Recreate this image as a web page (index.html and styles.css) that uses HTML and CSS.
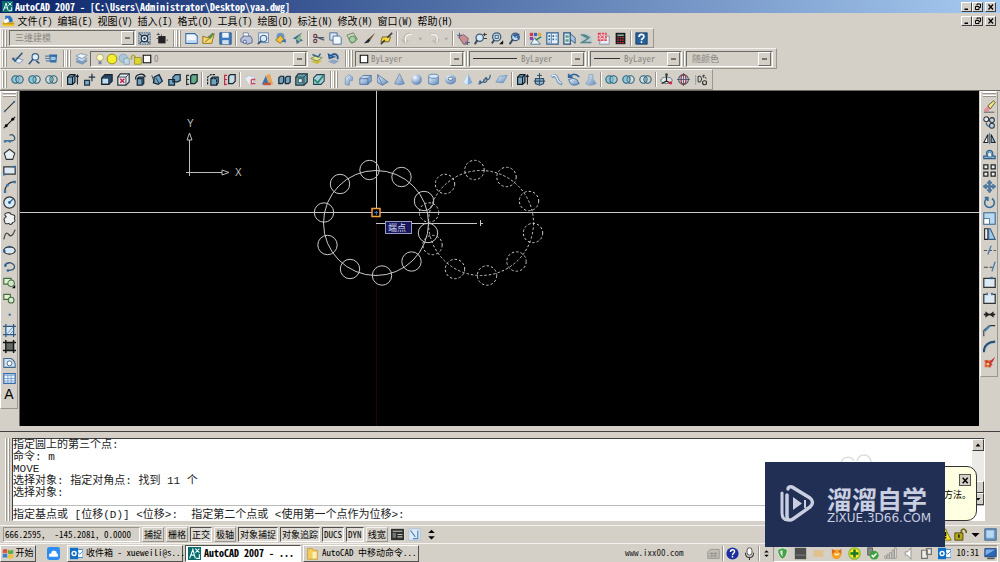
FILE: index.html
```html
<!DOCTYPE html>
<html lang="zh-CN">
<head>
<meta charset="utf-8">
<title>AutoCAD 2007</title>
<link rel="stylesheet" href="styles.css">
</head>
<body>
<svg class="defs" aria-hidden="true">
<defs>
<linearGradient id="g" x1="0" y1="0" x2="1" y2="1"><stop offset="0" stop-color="#eef6ff"/><stop offset="1" stop-color="#5d86b8"/></linearGradient>
<radialGradient id="gr" cx=".35" cy=".3" r=".8"><stop offset="0" stop-color="#f4f9ff"/><stop offset="1" stop-color="#4c78b0"/></radialGradient>
</defs>
<symbol id="acad" viewBox="0 0 16 16"><path fill="#0b6b6b" d="M0 0h16v16H0z"/><path d="M2 14 6 3l3 11M3 10h5M9 2l5 5M14 2 9 7M10 14h4V9" stroke="#e8ffff" stroke-width="1.4" fill="none"/></symbol>
<symbol id="dwg" viewBox="0 0 16 16"><path fill="#f4c430" d="M1 9h14v6H1z"/><path fill="#2a6fc0" d="M4 2h6l3 4v4H4z"/><path fill="#fff" d="M2 8l5-3 2 4-5 3z"/><path d="M1 12h14" stroke="#a87a10"/></symbol>
<symbol id="gear" viewBox="0 0 16 16"><path d="M1 1h14v14H1z" fill="#b9cbd8" stroke="#2e4358" stroke-dasharray="2 1"/><circle cx="8" cy="8" r="4" fill="#e7eef4" stroke="#26394c" stroke-width="1.6"/><circle cx="8" cy="8" r="1.5" fill="#26394c"/><path d="m2 2 3 3m6 6 3 3M14 2l-3 3M5 11l-3 3" stroke="#26394c" stroke-width="1.3"/></symbol>
<symbol id="ws" viewBox="0 0 16 16"><path d="M4 5h9v9H4z" fill="#222"/><path d="M4 1v3M2 3h4M8 3v2M14 10h2M2 8h2" stroke="#444"/></symbol>
<symbol id="new" viewBox="0 0 16 16"><path d="M1 2h11l3 3v9H1z" fill="#f0f7ff" stroke="#3a6ca8" stroke-width="1.3"/><path d="M3 10h11v3H3z" fill="#bcd6f2"/></symbol>
<symbol id="open" viewBox="0 0 16 16"><path d="M1 14V5l5 2 9-5-3 12z" fill="#f5d76c" stroke="#80651a"/><path d="M7 6 13 1l2 1-5 7z" fill="#5f8a48"/><path d="m4 12 5-4" stroke="#7a5b10"/></symbol>
<symbol id="save" viewBox="0 0 16 16"><path d="M1 1h14v14H1z" fill="#3f79bd" stroke="#234c80"/><path d="M4 1h8v6H4z" fill="#eaf3fc"/><path d="M4 10h8v5H4z" fill="#cfdeed"/></symbol>
<symbol id="print" viewBox="0 0 16 16"><path d="M4 1h6l1 6H4z" fill="#fff" stroke="#6877a0"/><path d="M1 8l4-3h8l2 4v4l-6 2-8-3z" fill="#b9c2dc" stroke="#4e5b86"/><circle cx="6" cy="12" r="2" fill="#dfe5f5" stroke="#4e5b86"/></symbol>
<symbol id="prev" viewBox="0 0 16 16"><path d="M2 1h12v12H2z" fill="#eef6fc" stroke="#5278a2"/><circle cx="8" cy="8" r="4" fill="#d5eafa" stroke="#46688c" stroke-width="1.4"/><path d="m5 11-4 4" stroke="#37536f" stroke-width="2"/></symbol>
<symbol id="pub" viewBox="0 0 16 16"><circle cx="8" cy="6" r="5" fill="#6e97c7"/><path d="M2 10l6-6 4 5-4 5z" fill="#f1c23e" stroke="#8a6a18"/><path d="M9 12l5-4 1 5z" fill="#3774b8"/></symbol>
<symbol id="dwf" viewBox="0 0 16 16"><path d="M13 1 2 8l4 1 1 6 4-3 4-2-4-2z" fill="#3f6f92"/><path d="M13 1 6 9l5 3z" fill="#8bbf8c"/></symbol>
<symbol id="cut" viewBox="0 0 16 16"><path d="M15 7H6M15 10 5 6" stroke="#505a70" stroke-width="1.6"/><circle cx="4" cy="5" r="2" fill="none" stroke="#6a3a4a" stroke-width="1.4"/><circle cx="4" cy="11" r="2" fill="none" stroke="#6a3a4a" stroke-width="1.4"/></symbol>
<symbol id="copy" viewBox="0 0 16 16"><path d="M1 1h9v9H1z" fill="#d6e6f5" stroke="#3a5f8a"/><path d="M5 5h8l2 2v8H5z" fill="#f2f8ff" stroke="#3a5f8a"/></symbol>
<symbol id="paste" viewBox="0 0 16 16"><path d="M1 4l8-3 5 8-7 5z" fill="#cfd9c2" stroke="#5f7356"/><circle cx="8" cy="9" r="4" fill="#a5cf9e" stroke="#4c7b50"/></symbol>
<symbol id="brush" viewBox="0 0 16 16"><path d="M15 1 7 8l2 2z" fill="#6b573a"/><path d="M7 8 1 14l6-1 2-3z" fill="#20252c"/></symbol>
<symbol id="match" viewBox="0 0 16 16"><path d="M3 6h10l-2 6H1z" fill="#f7d63e" stroke="#665410"/><path d="M15 1 9 7M6 10l-5 5" stroke="#444" stroke-width="2"/></symbol>
<symbol id="undo" viewBox="0 0 16 16"><path d="M12 2C5 1 3 6 5 12M1 9l4 4 4-3" stroke="#b9b7b2" stroke-width="2" fill="none"/><path d="M13 3C6 2 4 7 6 13" stroke="#f7f7f4" stroke-width="1.500" fill="none"/></symbol>
<symbol id="redo" viewBox="0 0 16 16"><path d="M4 2c7-1 9 4 7 10M7 10l4 3 4-4" stroke="#b9b7b2" stroke-width="2" fill="none"/><path d="M5 3c7-1 9 4 7 10" stroke="#f7f7f4" stroke-width="1.500" fill="none"/></symbol>
<symbol id="tiny" viewBox="0 0 16 16"><path d="M5 7h5l-2 3z" fill="#aaa8a2"/></symbol>
<symbol id="pan" viewBox="0 0 16 16"><path d="M2 6c2-3 5-1 6-3l6 5-2 7H8z" fill="#c98d93" stroke="#70505a"/><path d="M3 1v6M0 4h6M13 11v5M10 13h6" stroke="#51678b" stroke-width="1.3"/></symbol>
<symbol id="zoomr" viewBox="0 0 16 16"><circle cx="7" cy="7" r="4.5" fill="#d2eaf8" stroke="#3f5a78" stroke-width="1.6"/><path d="m4 10-3 5" stroke="#33495f" stroke-width="2.4"/><path d="M11 3h5M13 1v4M12 8h4" stroke="#222"/></symbol>
<symbol id="zoomw" viewBox="0 0 16 16"><circle cx="7" cy="6" r="5" fill="#c9e2f2" stroke="#3f5a78" stroke-width="1.6"/><path d="M5 4h4v4H5z" fill="none" stroke="#345"/><path d="m4 10-3 4" stroke="#33495f" stroke-width="2.2"/><path d="M15 10v5h-5z" fill="#111"/></symbol>
<symbol id="zoomp" viewBox="0 0 16 16"><circle cx="9" cy="6" r="4.7" fill="#b8d6ee" stroke="#3f5a78" stroke-width="1.6"/><path d="m6 9-4 6" stroke="#33495f" stroke-width="2.4"/><path d="M15 2 5 3l4 4zM9 5h5v5" fill="#2f5f9a"/></symbol>
<symbol id="props" viewBox="0 0 16 16"><path d="M1 1h4v4H1z" fill="#d33a48"/><path d="M6 1h4v4H6z" fill="#3b62c9"/><path d="M11 1h4v4h-4z" fill="#d9b13b"/><path d="M1 6h4v4H1z" fill="#8c45af"/><path d="M2 15 7 7l7 8z" fill="#eaf4fd" stroke="#42688e"/><path d="m8 10 7-4" stroke="#27804c" stroke-width="2"/></symbol>
<symbol id="dc" viewBox="0 0 16 16"><path d="M1 1h14v14H1z" fill="#e6f2fc" stroke="#31608e" stroke-width="1.5"/><path d="M3 4h2v2H3zM3 8h2v2H3zM3 12h2v1H3zM8 4h2v2H8zM12 4h1v2h-1zM8 8h2v2H8zM12 8h1v2h-1zM8 12h5" fill="#315f8d"/><path d="M6.500 2v12" stroke="#31608e"/></symbol>
<symbol id="tp" viewBox="0 0 16 16"><path d="M1 1h8v14H1z" fill="#d8eafa" stroke="#284f79" stroke-width="1.5"/><path d="M3 4h4v3H3zM3 9h4v3H3z" fill="#62a07d"/><path d="M9 2l6 5v7l-6-5z" fill="#a8c5df" stroke="#284f79"/></symbol>
<symbol id="ssm" viewBox="0 0 16 16"><path d="M1 2h9l5 4v8H1z" fill="#bccbd1"/><path d="m1 3 9 5-8 5h12M4 3l8 4" stroke="#538783" fill="none" stroke-width="1.7"/></symbol>
<symbol id="mark" viewBox="0 0 16 16"><path d="M5 5h10v10H3z" fill="#e7eef8" stroke="#7b86a6"/><path d="M2 2h9v8H2z" fill="#fbd3d5" stroke="#d8485a" stroke-width="2" stroke-dasharray="3 1"/><path d="m4 4 5 4m0-4L4 8" stroke="#c4283a"/></symbol>
<symbol id="calc" viewBox="0 0 16 16"><path d="M2 1h12v14H2z" fill="#161b20"/><path d="M4 3h8v2H4z" fill="#8ab59c"/><path d="M4 7h8M4 10h8M4 13h8" stroke="#d23c3c" stroke-width="1.600" stroke-dasharray="2 1"/></symbol>
<symbol id="help" viewBox="0 0 16 16"><path d="M1 1h14v14H1z" fill="#25619d" stroke="#16365a"/><path d="M5 6c0-4 6-4 6-.5C11 8 8 8 8 10M8 11.500v2" stroke="#fff" stroke-width="2" fill="none"/></symbol>
<symbol id="l1" viewBox="0 0 16 16"><path d="M1 9l6-2 8 3-5 4z" fill="#e9f3fb" stroke="#6b8fb4"/><path d="M14 1 5 11 2 7" stroke="#35587c" stroke-width="2" fill="none"/></symbol>
<symbol id="l2" viewBox="0 0 16 16"><path d="M1 12l6-8 7 9z" fill="#cbd9ea"/><circle cx="9" cy="6" r="4" fill="#deeffa" stroke="#3c628a" stroke-width="1.5"/><path d="m6 9-5 6m9-4 4 3" stroke="#36536f" stroke-width="2"/></symbol>
<symbol id="l3" viewBox="0 0 16 16"><path d="M5 3h10l-1 10H6z" fill="#2e6ca9"/><path d="M0 5h7M0 8h7M1 11h7" stroke="#5b7f9f" stroke-width="1.500"/><path d="M7 6h6v4H7z" fill="#9cc6e6"/></symbol>
<symbol id="layers" viewBox="0 0 16 16"><path d="m1 12 6-3 8 2-6 4z" fill="#7b9fc1" stroke="#7893ac"/><path d="m1 9 6-3 8 2-6 4z" fill="#c6d9ea" stroke="#7893ac"/><path d="m1 5 6-3 8 2-6 4z" fill="#edf4fb" stroke="#7893ac"/></symbol>
<symbol id="bulb" viewBox="0 0 16 16"><circle cx="8" cy="6" r="4.500" fill="#fffbc7" stroke="#a39c58"/><path d="M6 11h4v4H6z" fill="#7785a0"/></symbol>
<symbol id="sun" viewBox="0 0 16 16"><circle cx="8" cy="8" r="6.500" fill="#f6f02a" stroke="#938b1b" stroke-width="1.300"/></symbol>
<symbol id="frz" viewBox="0 0 16 16"><circle cx="7" cy="7" r="5.500" fill="#a9c8d9" stroke="#7f9db0"/><path d="M8 7h7v8H8z" fill="#c6d9e5" stroke="#7f9db0"/></symbol>
<symbol id="lock" viewBox="0 0 16 16"><path d="M2 9V5q2-4 5 0v3" fill="none" stroke="#a8a83c" stroke-width="2"/><path d="M6 6h9v9H6z" fill="#ddd630" stroke="#8f8a26"/></symbol>
<symbol id="sq" viewBox="0 0 16 16"><path d="M2 2h12v12H2z" fill="#fff" stroke="#111" stroke-width="1.800"/></symbol>
<symbol id="lcur" viewBox="0 0 16 16"><path d="m1 12 6-3 8 2-6 4z" fill="#cdbd45"/><path d="m1 8 6-3 8 2-6 4z" fill="#e7e38a" stroke="#68834b"/><path d="m3 3 7 3 3-4" stroke="#31658d" stroke-width="2" fill="none"/></symbol>
<symbol id="lprev" viewBox="0 0 16 16"><path d="m1 12 6-3 8 2-6 4z" fill="#8ea6c1"/><path d="M13 9c2-6-5-9-8-4M2 3l1 5 5-2z" stroke="#245a96" stroke-width="2" fill="#245a96" fill-opacity=".3"/></symbol>
<symbol id="u1" viewBox="0 0 16 16"><circle cx="5.500" cy="8" r="4.500" fill="#91c6d8" stroke="#285f78" stroke-width="1.300"/><circle cx="10.500" cy="8" r="4.500" fill="#91c6d8" fill-opacity=".6" stroke="#285f78" stroke-width="1.300"/></symbol>
<symbol id="u2" viewBox="0 0 16 16"><circle cx="10.500" cy="8" r="4.500" fill="#d8dcd8" stroke="#285f78" stroke-width="1.300"/><circle cx="5.500" cy="8" r="4.500" fill="#91c6d8" stroke="#285f78" stroke-width="1.300"/><path d="M8 4.500q-4 3.500 0 7" fill="none" stroke="#285f78"/></symbol>
<symbol id="u3" viewBox="0 0 16 16"><circle cx="5.500" cy="8" r="4.500" fill="#d8dcd8" stroke="#285f78" stroke-width="1.300"/><circle cx="10.500" cy="8" r="4.500" fill="none" stroke="#285f78" stroke-width="1.300"/><path d="M8 4.500q3 3.500 0 7-3-3.500 0-7" fill="#5faac4"/></symbol>
<symbol id="ext" viewBox="0 0 16 16"><path d="M2 5l3-3h6v9l-3 3H2z" fill="#7fa9c1" stroke="#111d2b" stroke-width="1.500"/><path d="M2 5h6v9M8 5l3-3M14 14V3m-1.500 2L14 2.500 15.500 5" fill="none" stroke="#111d2b" stroke-width="1.300"/></symbol>
<symbol id="mvf" viewBox="0 0 16 16"><path d="M2 9h6v6H2z" fill="#7fa9c1" stroke="#1d3144" stroke-width="1.500"/><path d="M11 1v9M7 5h8" stroke="#1d3144" stroke-width="1.500"/></symbol>
<symbol id="off" viewBox="0 0 16 16"><path d="M2 6l4-4h9v8l-4 4H2z" fill="#234562" stroke="#15202b" stroke-width="1.300"/><path d="M3 7h7v6H3z" fill="#c5deed"/></symbol>
<symbol id="del" viewBox="0 0 16 16"><path d="M1 5l3-4h11v10l-4 4H1z" fill="#e4e9ed" stroke="#24323f" stroke-width="1.500"/><path d="M1 5h10v10M11 5l4-4" fill="none" stroke="#24323f"/><path d="m4 7 5 5m0-5-5 5" stroke="#cc2348" stroke-width="1.800"/></symbol>
<symbol id="rot" viewBox="0 0 16 16"><path d="M4 7l2-2h6v8l-2 2H4z" fill="#6fa3bf" stroke="#142637" stroke-width="1.500"/><path d="M2 8C1 1 12-1 14 5M4 7h6v7" fill="none" stroke="#142637" stroke-width="1.400"/></symbol>
<symbol id="tap" viewBox="0 0 16 16"><path d="M4 5 10 2l4 8-5 4-6-2z" fill="#6fa3bf" stroke="#142637" stroke-width="1.500"/><path d="M1 3l3 8M6 6l4 7" stroke="#142637"/></symbol>
<symbol id="cpf" viewBox="0 0 16 16"><path d="M1 8h7v7H1zM6 5l3-3h6v7l-3 2H6z" fill="#6fa3bf" stroke="#142637" stroke-width="1.500"/></symbol>
<symbol id="col" viewBox="0 0 16 16"><path d="M7 4l2-2h6v8l-3 3H7z" fill="#65a985" stroke="#142637" stroke-width="1.500"/><path d="M2 2v13M2 3h3M2 8h3M2 14h3" stroke="#26383a" stroke-width="1.500"/></symbol>
<symbol id="colr" viewBox="0 0 16 16"><path d="M7 4l2-2h6v8l-3 3H7z" fill="#c9dbe3" stroke="#142637" stroke-width="1.500"/><path d="M2 2v13M2 3h3M2 8h3M2 14h3" stroke="#bd2e45" stroke-width="1.500"/></symbol>
<symbol id="colf" viewBox="0 0 16 16"><path d="M6 7l2-2h7v7l-2 3H6z" fill="#6fa3bf" stroke="#142637" stroke-width="1.500"/><path d="M6 7h7v8M2 14V5l4-3h5" fill="none" stroke="#142637" stroke-width="1.400" stroke-dasharray="3 1"/></symbol>
<symbol id="imp" viewBox="0 0 16 16"><path d="M1 6l5-3 7 2-2 9H7" fill="#e6edf8" stroke="#b6bdd2"/><path d="M9 8h5M9 8v5h5" stroke="#c94559" stroke-width="1.600" fill="none"/></symbol>
<symbol id="cln" viewBox="0 0 16 16"><path d="m1 14 5-11 4 11z" fill="#3774b0"/><path d="m6 3 5-2 4 13h-5z" fill="#e5a65b"/><path d="M3 12h9v3H3z" fill="#c4543d"/></symbol>
<symbol id="sep" viewBox="0 0 16 16"><path d="M1 6l2-2h4v7l-2 2H1zM9 6l2-2h4v7l-2 2H9z" fill="#6fa3bf" stroke="#142637" stroke-width="1.500"/></symbol>
<symbol id="shell" viewBox="0 0 16 16"><path d="M1 5l3-4h11v10l-4 4H1z" fill="#6da6ad" stroke="#193440" stroke-width="1.500"/><path d="M4 7h5v5H4z" fill="#d7eaea" stroke="#193440"/><path d="M11 5v10M11 5H1M11 5l4-4" stroke="#193440"/></symbol>
<symbol id="chk" viewBox="0 0 16 16"><path d="M2 6l4-4h9v8l-4 4H2z" fill="#a9cedb" stroke="#1f4453" stroke-width="1.300"/><path d="m3 8 4 4 7-9" stroke="#218464" stroke-width="2" fill="none"/></symbol>
<symbol id="ps" viewBox="0 0 16 16"><path d="M4 14V6l4-4 5 3v4l-4 1v5z" fill="url(#g)" stroke="#7297c2"/></symbol>
<symbol id="box" viewBox="0 0 16 16"><path d="M1 7l4-4h10v7l-4 4H1z" fill="url(#g)" stroke="#426b9e"/><path d="M1 7h10v7M11 7l4-4" stroke="#426b9e" fill="none"/></symbol>
<symbol id="wedge" viewBox="0 0 16 16"><path d="M2 2l13 9-7 4-6-3z" fill="url(#g)" stroke="#557aa5"/><path d="M2 2l6 13" stroke="#557aa5"/></symbol>
<symbol id="cone" viewBox="0 0 16 16"><path d="m8 1 6 12q-6 3-12 0z" fill="url(#g)" stroke="#6587aa"/></symbol>
<symbol id="sph" viewBox="0 0 16 16"><circle cx="8" cy="8" r="6.500" fill="url(#gr)"/></symbol>
<symbol id="cyl" viewBox="0 0 16 16"><path d="M2 4v9q6 3 12 0V4" fill="url(#g)" stroke="#4f78a6"/><ellipse cx="8" cy="4" rx="6" ry="2.500" fill="#d9e9f8" stroke="#4f78a6"/></symbol>
<symbol id="tor" viewBox="0 0 16 16"><ellipse cx="8" cy="8" rx="7" ry="6" fill="url(#gr)"/><ellipse cx="8" cy="7" rx="3" ry="2" fill="#eef2f4" stroke="#315c90"/></symbol>
<symbol id="pyr" viewBox="0 0 16 16"><path d="m9 1 5 11-6 3-5-4z" fill="#84add8"/><path d="M9 1 8 15l-5-4z" fill="#dceafa"/></symbol>
<symbol id="helix" viewBox="0 0 16 16"><path d="M1 12c1 4 4-1 2-2s-1 4 3 1 1-5 1-1 5 0 4-3-4 0 0 1 4-5 4-6" fill="none" stroke="#3e6387" stroke-width="1.500"/></symbol>
<symbol id="plane" viewBox="0 0 16 16"><path d="M1 11c2 0 3-8 6-7l8-1-5 9z" fill="url(#g)" stroke="#6b8fbb"/></symbol>
<symbol id="pull" viewBox="0 0 16 16"><path d="M3 7h10v6l-5 2-5-2z" fill="#9ab9d0" stroke="#31506c" stroke-width="1.400"/><path d="M8 0v6M5 3h6M1 10h14M8 8v6" stroke="#31506c" stroke-width="1.300"/></symbol>
<symbol id="sweep" viewBox="0 0 16 16"><path d="M2 5q5-4 7 2t6 6" stroke="#7395b8" stroke-width="4" fill="none"/><path d="M2 4q5-3 7 3t5 5" stroke="#e8f2fb" stroke-width="1.500" fill="none"/></symbol>
<symbol id="rev" viewBox="0 0 16 16"><path d="M2 5q7-7 13 0M2 1v4h5" stroke="#2f659b" stroke-width="2" fill="none"/><path d="M2 8q6-3 10 0l3 5q-7 4-11 0z" fill="url(#g)" stroke="#376892"/></symbol>
<symbol id="loft" viewBox="0 0 16 16"><path d="M6 2h5v5l4 6q-7 4-13 0l4-6z" fill="url(#g)" stroke="#86a2bd"/></symbol>
<symbol id="orb" viewBox="0 0 16 16"><ellipse cx="8" cy="9" rx="7" ry="4" fill="#e2e6e8" stroke="#48626d"/><path d="M8 2v8l6 3M8 10l-6 3" fill="none" stroke="#222" stroke-width="1.500"/><circle cx="13" cy="12" r="2" fill="#dd2742"/><circle cx="8" cy="2" r="1.600" fill="#243"/></symbol>
<symbol id="orb2" viewBox="0 0 16 16"><circle cx="8" cy="8" r="6" fill="#e2d8dd" stroke="#3b6057" stroke-width="1.300"/><ellipse cx="8" cy="8" rx="3" ry="6" fill="none" stroke="#a13555" stroke-width="1.500"/><path d="M0 8h16M8 0v16" stroke="#3c4d69"/></symbol>
<symbol id="orb3" viewBox="0 0 16 16"><path d="M2 3v12" stroke="#777" stroke-dasharray="2 1"/><path d="M5 4h3q3 3 0 7H5zM12 2v4M10 4l3-1M14 5l1 2" fill="none" stroke="#333" stroke-width="1.200"/><circle cx="13" cy="12" r="2.500" fill="none" stroke="#333" stroke-width="1.400"/></symbol>
<symbol id="line" viewBox="0 0 16 16"><path d="M2 14 14 2" stroke="#333" stroke-width="1.400"/><path d="M1 13h2v2H1zM13 1h2v2h-2z" fill="#3b6ba0"/></symbol>
<symbol id="xl" viewBox="0 0 16 16"><path d="M1 15 15 1" stroke="#222" stroke-width="1.500"/><circle cx="4" cy="12" r="1.800"/><circle cx="12" cy="4" r="1.800"/></symbol>
<symbol id="pl" viewBox="0 0 16 16"><path d="M2 11h9q5-1 3-5t-6-2" fill="none" stroke="#37516b" stroke-width="1.500"/><path d="M1 10h3v3H1zM7 10h3v3H7z" fill="#3477af"/></symbol>
<symbol id="poly" viewBox="0 0 16 16"><path d="m8 1.500 6.500 5L12 14H4L1.500 6.500z" fill="#e6eff5" stroke="#333" stroke-width="1.300"/></symbol>
<symbol id="rect" viewBox="0 0 16 16"><path d="M1 3.500h14v9H1z" fill="#dbe9f4" stroke="#333" stroke-width="1.500"/><path d="M0 11h3v3H0zM13 2h3v3h-3z" fill="#386fa8"/></symbol>
<symbol id="arc" viewBox="0 0 16 16"><path d="M2 15Q3 3 14 2" fill="none" stroke="#333" stroke-width="1.500"/><path d="M1 13h3v3H1zM4 5h3v3H4zM13 1h3v3h-3z" fill="#3c76ac"/></symbol>
<symbol id="circ" viewBox="0 0 16 16"><circle cx="8" cy="8" r="7" fill="#d9eaf8" stroke="#333" stroke-width="1.400"/><path d="m8 8 4-4" stroke="#2264a2" stroke-width="1.500"/><circle cx="8" cy="8" r="1.800" fill="#2264a2"/></symbol>
<symbol id="cloud" viewBox="0 0 16 16"><path d="M4 6Q0 2 5 1q4-1 5 2 6 0 4 5 2 4-2 5-2 4-5 1-5 2-5-3-2-3 2-5z" fill="#eef2f2" stroke="#333" stroke-width="1.300"/></symbol>
<symbol id="spl" viewBox="0 0 16 16"><path d="M1 14Q3 3 7 8t8-6" fill="none" stroke="#444" stroke-width="1.500"/></symbol>
<symbol id="ell" viewBox="0 0 16 16"><ellipse cx="8" cy="8" rx="7" ry="4.500" fill="#d6e7f5" stroke="#222" stroke-width="1.400"/><path d="M0 7h3v3H0zM7 2h2v3H7z" fill="#2264a2"/></symbol>
<symbol id="ella" viewBox="0 0 16 16"><path d="M2 7q3-5 9-3 6 4 1 8l-6 1" fill="none" stroke="#355779" stroke-width="1.600"/><circle cx="3" cy="7" r="1.500" fill="#2264a2"/><circle cx="6" cy="13" r="1.500" fill="#2264a2"/></symbol>
<symbol id="ins" viewBox="0 0 16 16"><path d="M1 3h9v7H1z" fill="#dff2d2" stroke="#466c43" stroke-width="1.400"/><circle cx="10" cy="9" r="4" fill="#cfe8c6" stroke="#466c43" stroke-width="1.300"/><path d="M15 11v4h-4z"/></symbol>
<symbol id="mk" viewBox="0 0 16 16"><path d="M1 3h8v6H1z" fill="#dff2d2" stroke="#466c43" stroke-width="1.400"/><circle cx="10" cy="10" r="3.500" fill="#d8e9cc" stroke="#466c43" stroke-width="1.300"/></symbol>
<symbol id="pt" viewBox="0 0 16 16"><path d="M7 7h2.500v2.500H7z" fill="#356797"/></symbol>
<symbol id="hat" viewBox="0 0 16 16"><path d="M4 3h9v10H4z" fill="#d6eafb"/><path d="M0 3h16M0 13h16M3.500 0v16M13 0v16" stroke="#315a83" stroke-width="1.500"/><path d="m5 12 7-8M8 13l5-5" stroke="#4e82b5"/></symbol>
<symbol id="grad" viewBox="0 0 16 16"><path d="M4 3h9v10H4z" fill="#626a64"/><path d="M0 3h16M0 13h16M3.500 0v16M13 0v16" stroke="#151515" stroke-width="1.800"/></symbol>
<symbol id="reg" viewBox="0 0 16 16"><path d="M1 14V3h9q5 3 5 8v3z" fill="#d1e4f5" stroke="#42698f" stroke-width="1.300"/><circle cx="8" cy="9" r="3" fill="#fff" stroke="#315577"/></symbol>
<symbol id="tab" viewBox="0 0 16 16"><path d="M1 2h14v12H1z" fill="#edf5fc" stroke="#376caa" stroke-width="1.500"/><path d="M1 4h14M6 3v11M10 3v11M1 8h14M1 11h14" stroke="#6b97cc"/></symbol>
<symbol id="erase" viewBox="0 0 16 16"><path d="m1 12 5-5 3 4-3 3H2z" fill="#e5919b"/><path d="m6 7 7-6 2 2-6 8z" fill="#f5e684" stroke="#4a4630"/><path d="M1 15h13" stroke="#444"/></symbol>
<symbol id="cp" viewBox="0 0 16 16"><circle cx="4" cy="4" r="3" fill="#e2edf5" stroke="#333" stroke-width="1.300"/><circle cx="11" cy="5" r="3" fill="#b5d3e8" stroke="#333" stroke-width="1.300"/><circle cx="11" cy="12" r="3" fill="#b5d3e8" stroke="#333" stroke-width="1.300"/><path d="M4 8q0 4 4 5" stroke="#36668d" fill="none" stroke-width="1.500"/></symbol>
<symbol id="mir" viewBox="0 0 16 16"><path d="M6 3v10H1z" fill="#fff" stroke="#222" stroke-width="1.300"/><path d="M10 3v10h5z" fill="#7bb4dc" stroke="#222" stroke-width="1.300"/><path d="M8 1v14" stroke="#356797"/></symbol>
<symbol id="ofs" viewBox="0 0 16 16"><path d="M1 13v-3h4Q3 3 8 3t4 7h3v3z" fill="#93c2e3" stroke="#315e87" stroke-width="1.500"/><path d="M5 11h6q0-6-3-6t-2 6" fill="#e7f0f5" stroke="#315e87"/></symbol>
<symbol id="arr" viewBox="0 0 16 16"><path d="M1 1h5v5H1zM10 1h5v5h-5zM1 10h5v5H1zM10 10h5v5h-5z" fill="#e8eff3" stroke="#222" stroke-width="1.500"/></symbol>
<symbol id="mv" viewBox="0 0 16 16"><path d="M8 0l3 4H9v3h3V5l4 3-4 3V9H9v3h2l-3 4-3-4h2V9H4v2L0 8l4-3v2h3V4H5z" fill="#4b80b0" stroke="#284f76" stroke-width=".6"/></symbol>
<symbol id="ro" viewBox="0 0 16 16"><path d="M5 3a6 6 0 1 0 6 0M2 2h4v4" fill="none" stroke="#3a6c99" stroke-width="2"/></symbol>
<symbol id="sc" viewBox="0 0 16 16"><path d="M1 1h14v14H1z" fill="#b9d9ef" stroke="#37658f" stroke-width="1.300"/><path d="M1 8h7v7H1z" fill="#fff" stroke="#37658f"/></symbol>
<symbol id="st" viewBox="0 0 16 16"><path d="M2 1h4v13H2z" fill="#e8f0f5" stroke="#222" stroke-width="1.300"/><path d="M7 1h2l6 13H7z" fill="#9dcaea" stroke="#35597b" stroke-width="1.300"/></symbol>
<symbol id="tr" viewBox="0 0 16 16"><path d="M1 8h4M7 8h4M13 8h3" stroke="#555" stroke-width="1.300"/><path d="m6 13 4-11" stroke="#4a7bab" stroke-width="1.700"/></symbol>
<symbol id="ex" viewBox="0 0 16 16"><path d="M1 9h5M8 9h4" stroke="#444" stroke-width="1.300"/><path d="m11 14 4-12" stroke="#4a7bab" stroke-width="1.700"/></symbol>
<symbol id="bp" viewBox="0 0 16 16"><path d="M1 3h14v11H1z" fill="#dceaf6" stroke="#333" stroke-width="1.500"/><path d="M9 1h3v3H9z" fill="#346b9e"/></symbol>
<symbol id="br" viewBox="0 0 16 16"><path d="M1 3h14v11H1z" fill="#dceaf6"/><path d="M4 3H1v11h14V3h-3" fill="none" stroke="#333" stroke-width="1.500"/><path d="M4 1h2v3H4zM10 1h2v3h-2z" fill="#346b9e"/></symbol>
<symbol id="jo" viewBox="0 0 16 16"><path d="M1 8h14" stroke="#222" stroke-width="2"/><path d="m3 4 5 4-5 4zM13 4 8 8l5 4z" fill="#222"/></symbol>
<symbol id="ch" viewBox="0 0 16 16"><path d="M1 15V8l7-6h7" fill="none" stroke="#333" stroke-width="1.300"/><path d="m2 9 7-7" stroke="#4189be" stroke-width="2"/></symbol>
<symbol id="fi" viewBox="0 0 16 16"><path d="M1 15Q1 3 15 2" fill="none" stroke="#274e71" stroke-width="2.500"/><path d="M3 13Q4 5 13 4" stroke="#94bfdf" fill="none"/></symbol>
<symbol id="xp" viewBox="0 0 16 16"><path d="M2 5h8v9H2z" fill="#e07a4a"/><path d="m2 5 4 1 1 2 2-2 6-5-3 6-2 2 2 2-3 1v2l-3-2-3 1 1-4z" fill="#c6353b"/><circle cx="6" cy="10" r="1.800" fill="#f3cd58"/></symbol>
<symbol id="min" viewBox="0 0 16 16"><path d="M3 11h7v3H3z"/></symbol>
<symbol id="res" viewBox="0 0 16 16"><path d="M6 2h7v7h-3M6 2v3" fill="none" stroke="#000" stroke-width="2"/><path d="M3 7h7v6H3z" fill="none" stroke="#000" stroke-width="2"/></symbol>
<symbol id="x" viewBox="0 0 16 16"><path d="m3 3 9 10m0-10L3 13" stroke="#000" stroke-width="2.500"/></symbol>
<symbol id="win" viewBox="0 0 16 16"><path d="M1 3q4-2 6 0v5Q4 6 1 8z" fill="#dc5538"/><path d="M8 3q3 2 7 0v5q-4 2-7 0z" fill="#65a942"/><path d="M1 9q3-2 6 0v5q-3-2-6 0z" fill="#397fc6"/><path d="M8 9q4 2 7 0v5q-4 2-7 0z" fill="#efc03a"/></symbol>
<symbol id="cl" viewBox="0 0 16 16"><rect width="16" height="16" rx="3" fill="#2e8df0"/><path d="M3 12q-2-4 2-4 1-5 5-3 2 0 2 3 3 1 1 4z" fill="#fff"/></symbol>
<symbol id="ol" viewBox="0 0 16 16"><path d="M8 3h8v10H8z" fill="#fff" stroke="#1b79cc"/><path d="m8 5 4 4 4-4" stroke="#1b79cc" fill="none"/><path d="M0 1h10v14H0z" fill="#1270c4"/><circle cx="5" cy="8" r="2.500" fill="none" stroke="#fff" stroke-width="1.700"/></symbol>
<symbol id="fold" viewBox="0 0 16 16"><path d="M2 2h6l1 2h5v11H2z" fill="#f4cf60" stroke="#c79a33"/><path d="M8 6h5v8H8z" fill="#fdf0b5"/></symbol>
<symbol id="kb" viewBox="0 0 16 16"><path d="M1 6l3-3h11v11H1z" fill="#c2bfb9" stroke="#8f8d88"/><path d="M3 8h10M3 11h10M6 6v7M10 6v7" stroke="#8f8d88"/></symbol>
<symbol id="q" viewBox="0 0 16 16"><circle cx="8" cy="8" r="7.500" fill="#1a2fa0"/><path d="M5.500 6c0-3.500 5-3.500 5-.5C10.500 8 8 7.500 8 10M8 11v2" stroke="#fff" stroke-width="1.800" fill="none"/></symbol>
<symbol id="mic" viewBox="0 0 16 16"><rect x="5" y="1" width="6" height="9" rx="3" fill="#fff" stroke="#333"/><path d="M3 7q0 6 5 6t5-6M8 13v3" stroke="#333" fill="none" stroke-width="1.300"/></symbol>
<symbol id="sh" viewBox="0 0 16 16"><path d="m8 1 6 2q0 9-6 12Q2 12 2 3z" fill="#48a14c" stroke="#e8f5e4"/><path d="M8 4v8q-3-2-3-7z" fill="#e4f2da"/></symbol>
<symbol id="dk" viewBox="0 0 16 16"><path d="M1 1h14v14H1z" fill="#4d504e"/><path d="M2 10h12" stroke="#8b8f8c"/></symbol>
<symbol id="or" viewBox="0 0 16 16"><path d="M2 4h12v8H2z" fill="#e9b568" fill-opacity=".6"/></symbol>
<symbol id="cat" viewBox="0 0 16 16"><circle cx="8" cy="9" r="6" fill="#f6a227"/><path d="M2 2l5 3-4 4zM14 2l-4 3 4 4z" fill="#d96a20"/><path d="M6 8q2 3 5 0" stroke="#fff4c0" stroke-width="2" fill="none"/></symbol>
<symbol id="plus" viewBox="0 0 16 16"><circle cx="8" cy="8" r="7" fill="#f6e827" stroke="#8fb52e" stroke-width="1.500"/><path d="M8 3v10M3 8h10" stroke="#157623" stroke-width="3"/></symbol>
<symbol id="usb" viewBox="0 0 16 16"><path d="M2 1h6v9H2z" fill="#868b86" stroke="#555"/><circle cx="10" cy="10" r="5.500" fill="#3aa13d"/><path d="m7 10 2 2 4-4" stroke="#fff" stroke-width="2" fill="none"/></symbol>
<symbol id="net" viewBox="0 0 16 16"><path d="M1 11h2v3H1zM4 9h2v5H4zM7 7h2v7H7zM10 4h2v10h-2zM13 1h2v13h-2z" fill="#f3f3f0" stroke="#77756f" stroke-width=".8"/></symbol>
<symbol id="vol" viewBox="0 0 16 16"><path d="M4 6h3l4-5v14l-4-5H4z" fill="#fff" stroke="#888"/></symbol>
<symbol id="pow" viewBox="0 0 16 16"><path d="M2 4h7v10H2zM8 2h6v7H8z" fill="#eee" stroke="#77756f" stroke-width="1.500"/></symbol>
<symbol id="mon" viewBox="0 0 16 16"><path d="M1 2h14v10H1z" fill="#2b67b5" stroke="#193c75"/><path d="M2 3h12L2 10z" fill="#7eb0e8"/><path d="M4 13h9v2H4z" fill="#555"/></symbol>
<symbol id="warn" viewBox="0 0 16 16"><path d="m8 1 7 14H1z" fill="#f8e32a" stroke="#74670a"/><path d="M8 5v5M8 11v2" stroke="#111" stroke-width="2"/></symbol>
<symbol id="ul" viewBox="0 0 16 16"><path d="M9 7V3q3-4 6 1v2" fill="none" stroke="#6d6510" stroke-width="2"/><path d="M1 6h10v9H1z" fill="#b4a91d" stroke="#403b08"/><path d="M6 8v4" stroke="#222" stroke-width="2"/></symbol>
<symbol id="clean" viewBox="0 0 16 16"><path d="M1 1h14v14H1z" fill="#6f9fc8" stroke="#2b5178"/><path d="M3 3h9v9H3z" fill="#b8d8f0"/></symbol>
<symbol id="model" viewBox="0 0 16 16"><path d="M0 1h16v14H0z" fill="#2e322f"/><path d="M2 4h12M8 8h6M8 11h6" stroke="#c9c6bd" stroke-width="1.500"/><path d="M2 6h4v6H2z" fill="#777"/></symbol>
<symbol id="lay" viewBox="0 0 16 16"><path d="M1 1h14v14H1z" fill="#dcebfa" stroke="#a9bed2"/><path d="m3 3 6 8M12 3v10H6" stroke="#6088b5" fill="none" stroke-width="1.500"/></symbol>
<symbol id="ud" viewBox="0 0 16 16"><path d="m8 2 4 4H4zM4 10h8l-4 4z"/></symbol>
<symbol id="dn" viewBox="0 0 16 16"><path d="M3 6h10l-5 5z"/></symbol>
<symbol id="up" viewBox="0 0 16 16"><path d="M3 11h10L8 5z"/></symbol>
</svg>

<div class="app">
<header class="title">
<svg class="i"><use href="#acad"/></svg><h1>AutoCAD 2007 - [C:\Users\Administrator\Desktop\yaa.dwg]</h1>
<div class="caps"><button aria-label="最小化"><svg><use href="#min"/></svg></button><button aria-label="还原"><svg><use href="#res"/></svg></button><button class="cx" aria-label="关闭"><svg><use href="#x"/></svg></button></div>
</header>
<nav class="menu">
<svg class="i"><use href="#dwg"/></svg>
<button>文件(F)</button><button>编辑(E)</button><button>视图(V)</button><button>插入(I)</button><button>格式(O)</button><button>工具(T)</button><button>绘图(D)</button><button>标注(N)</button><button>修改(M)</button><button>窗口(W)</button><button>帮助(H)</button>
<div class="caps"><button aria-label="最小化"><svg><use href="#min"/></svg></button><button aria-label="还原"><svg><use href="#res"/></svg></button><button class="cx" aria-label="关闭"><svg><use href="#x"/></svg></button></div>
</nav>

<div class="bars">
<div class="bar first">
<i class="grip"></i>
<span class="combo c126"><select aria-label="工作空间" disabled><option>三维建模</option></select></span>
<button><svg><use href="#gear"/></svg></button><button><svg><use href="#ws"/></svg></button>
<i class="grip wide"></i>
<button><svg><use href="#new"/></svg></button><button><svg><use href="#open"/></svg></button><button><svg><use href="#save"/></svg></button><i class="s"></i>
<button><svg><use href="#print"/></svg></button><button><svg><use href="#prev"/></svg></button><button><svg><use href="#pub"/></svg></button><button><svg><use href="#dwf"/></svg></button><i class="s"></i>
<button><svg><use href="#cut"/></svg></button><button><svg><use href="#copy"/></svg></button><button><svg><use href="#paste"/></svg></button><button><svg><use href="#brush"/></svg></button><button><svg><use href="#match"/></svg></button><i class="s"></i>
<button><svg><use href="#undo"/></svg></button><button class="half"><svg><use href="#tiny"/></svg></button><button><svg><use href="#redo"/></svg></button><button class="half"><svg><use href="#tiny"/></svg></button><i class="s"></i>
<button><svg><use href="#pan"/></svg></button><button><svg><use href="#zoomr"/></svg></button><button><svg><use href="#zoomw"/></svg></button><button><svg><use href="#zoomp"/></svg></button><i class="s"></i>
<button><svg><use href="#props"/></svg></button><button><svg><use href="#dc"/></svg></button><button><svg><use href="#tp"/></svg></button><button><svg><use href="#ssm"/></svg></button><button><svg><use href="#mark"/></svg></button><button><svg><use href="#calc"/></svg></button><i class="s"></i>
<button><svg><use href="#help"/></svg></button>
</div>
<div class="bar">
<i class="grip"></i>
<button><svg><use href="#l1"/></svg></button><button><svg><use href="#l2"/></svg></button><button><svg><use href="#l3"/></svg></button>
<i class="grip wide"></i>
<button><svg><use href="#layers"/></svg></button>
<span class="combo c218"><svg><use href="#bulb"/></svg><svg><use href="#sun"/></svg><svg><use href="#frz"/></svg><svg><use href="#lock"/></svg><svg class="sw"><use href="#sq"/></svg><select aria-label="图层" disabled><option>0</option></select></span>
<button><svg><use href="#lcur"/></svg></button><button><svg><use href="#lprev"/></svg></button>
<i class="grip wide"></i>
<span class="combo c110"><svg class="sw"><use href="#sq"/></svg><select aria-label="颜色" disabled><option>ByLayer</option></select></span>
<i class="s"></i>
<span class="combo c116"><b class="rule"></b><select aria-label="线型" disabled><option>ByLayer</option></select></span>
<i class="s"></i>
<span class="combo c91"><b class="rule short"></b><select aria-label="线宽" disabled><option>ByLayer</option></select></span>
<i class="s"></i>
<span class="combo c87"><select aria-label="打印样式" disabled><option>随颜色</option></select></span>
</div>
<div class="bar">
<i class="grip"></i>
<button><svg><use href="#u1"/></svg></button><button><svg><use href="#u2"/></svg></button><button><svg><use href="#u3"/></svg></button><i class="s"></i>
<button><svg><use href="#ext"/></svg></button><button><svg><use href="#mvf"/></svg></button><button><svg><use href="#off"/></svg></button><button><svg><use href="#del"/></svg></button><button><svg><use href="#rot"/></svg></button><button><svg><use href="#tap"/></svg></button><button><svg><use href="#cpf"/></svg></button><button><svg><use href="#col"/></svg></button><i class="s"></i>
<button><svg><use href="#colf"/></svg></button><button><svg><use href="#colr"/></svg></button><i class="s"></i>
<button><svg><use href="#imp"/></svg></button><button><svg><use href="#cln"/></svg></button><button><svg><use href="#sep"/></svg></button><button><svg><use href="#shell"/></svg></button><button><svg><use href="#chk"/></svg></button>
<i class="grip wide"></i>
<button><svg><use href="#ps"/></svg></button><button><svg><use href="#box"/></svg></button><button><svg><use href="#wedge"/></svg></button><button><svg><use href="#cone"/></svg></button><button><svg><use href="#sph"/></svg></button><button><svg><use href="#cyl"/></svg></button><button><svg><use href="#tor"/></svg></button><button><svg><use href="#pyr"/></svg></button><button><svg><use href="#helix"/></svg></button><button><svg><use href="#plane"/></svg></button><i class="s"></i>
<button><svg><use href="#ext"/></svg></button><button><svg><use href="#pull"/></svg></button><button><svg><use href="#sweep"/></svg></button><button><svg><use href="#rev"/></svg></button><button><svg><use href="#loft"/></svg></button><i class="s"></i>
<button><svg><use href="#u1"/></svg></button><button><svg><use href="#u2"/></svg></button><button><svg><use href="#u3"/></svg></button><i class="s"></i>
<button><svg><use href="#orb"/></svg></button><button><svg><use href="#orb2"/></svg></button><button><svg><use href="#orb3"/></svg></button>
</div>
</div>

<main class="work">
<aside class="side"><div class="vbar"><i class="hgrip"></i>
<button><svg><use href="#line"/></svg></button><button><svg><use href="#xl"/></svg></button><button><svg><use href="#pl"/></svg></button><button><svg><use href="#poly"/></svg></button><button><svg><use href="#rect"/></svg></button><button><svg><use href="#arc"/></svg></button><button><svg><use href="#circ"/></svg></button><button><svg><use href="#cloud"/></svg></button><button><svg><use href="#spl"/></svg></button><button><svg><use href="#ell"/></svg></button><button><svg><use href="#ella"/></svg></button><button><svg><use href="#ins"/></svg></button><button><svg><use href="#mk"/></svg></button><button><svg><use href="#pt"/></svg></button><button><svg><use href="#hat"/></svg></button><button><svg><use href="#grad"/></svg></button><button><svg><use href="#reg"/></svg></button><button><svg><use href="#tab"/></svg></button><button class="txt">A</button>
</div></aside>
<section class="canvas">
<svg>
<g fill="none" stroke="#c8c8c8">
<path d="M356.500 121V336" stroke="#1c0808"/>
<path d="M356.500 0v117" />
<line x1="0" y1="121.500" x2="100%" y2="121.500"/>
<path d="M356 132.500h101M460.500 129v6M461 132.500h2"/>
<g stroke="#bdbdbd">
<path d="M169.500 85V49M166 81.500h36M167 49l2.500-7 2.500 7zM202 79l7 2.500-7 2.500z"/>
</g>
<g id="ring">
<circle cx="356" cy="132" r="52.500"/>
<circle cx="349.500" cy="79" r="9.700"/><circle cx="381.500" cy="86" r="9.700"/><circle cx="404" cy="110" r="9.700"/><circle cx="408" cy="142" r="9.700"/><circle cx="391.500" cy="170.500" r="9.700"/><circle cx="362" cy="184.500" r="9.700"/><circle cx="330" cy="178" r="9.700"/><circle cx="307.500" cy="154" r="9.700"/><circle cx="304" cy="121.500" r="9.700"/><circle cx="320" cy="93" r="9.700"/>
</g>
<use href="#ring" x="105" stroke-dasharray="2.500 2"/>
<path d="M352 117.500h8v8h-8z" stroke="#f0a040" stroke-width="1.500" fill="#000"/><path d="M354 121.500h4M356.500 120v4" stroke="#2c6fc0"/>
</g>
<g class="ucs"><text x="167" y="36">Y</text><text x="215" y="85">X</text></g>
</svg>
<span class="tip">端点</span>
</section>
<aside class="side right"><div class="vbar"><i class="hgrip"></i>
<button><svg><use href="#erase"/></svg></button><button><svg><use href="#cp"/></svg></button><button><svg><use href="#mir"/></svg></button><button><svg><use href="#ofs"/></svg></button><button><svg><use href="#arr"/></svg></button><button><svg><use href="#mv"/></svg></button><button><svg><use href="#ro"/></svg></button><button><svg><use href="#sc"/></svg></button><button><svg><use href="#st"/></svg></button><button><svg><use href="#tr"/></svg></button><button><svg><use href="#ex"/></svg></button><button><svg><use href="#bp"/></svg></button><button><svg><use href="#br"/></svg></button><button><svg><use href="#jo"/></svg></button><button><svg><use href="#ch"/></svg></button><button><svg><use href="#fi"/></svg></button><button><svg><use href="#xp"/></svg></button>
</div></aside>
</main>

<section class="cmd">
<i class="grip tall"></i>
<div class="term">
<div class="log"><div class="lines"><p>指定圆上的第三个点:</p><p>命令: m</p><p>MOVE</p><p>选择对象: 指定对角点: 找到 11 个</p><p>选择对象:</p></div>
<div class="scroll"><button aria-label="上"><svg><use href="#up"/></svg></button><i></i><button class="thumb" aria-label="滑块"></button><button aria-label="下"><svg><use href="#dn"/></svg></button></div></div>
<input aria-label="命令行" value="指定基点或 [位移(D)] &lt;位移&gt;:  指定第二个点或 &lt;使用第一个点作为位移&gt;:">
</div>
</section>

<footer class="status">
<span class="coord">666.2595,&nbsp; -145.2081, 0.0000</span>
<button>捕捉</button><button>栅格</button><button class="on">正交</button><button>极轴</button><button class="on">对象捕捉</button><button class="on">对象追踪</button><button class="on">DUCS</button><button class="on">DYN</button><button>线宽</button><button class="on ic"><svg><use href="#model"/></svg></button><button class="ic"><svg><use href="#lay"/></svg></button><button class="ic"><svg><use href="#ud"/></svg></button>
<div class="end"><svg><use href="#warn"/></svg><svg><use href="#ul"/></svg><svg><use href="#dn"/></svg><svg><use href="#clean"/></svg></div>
</footer>
<footer class="task">
<button class="start"><svg><use href="#win"/></svg>开始</button>
<svg class="ql"><use href="#cl"/></svg>
<button class="app-b"><svg><use href="#ol"/></svg>收件箱 - xueweili@s...</button>
<button class="app-b act"><svg><use href="#acad"/></svg>AutoCAD 2007 - ...</button>
<button class="app-b"><svg><use href="#fold"/></svg>AutoCAD 中移动命令...</button>
<div class="lang"><a href="#">www.ixx00.com</a><svg><use href="#kb"/></svg><i class="s"></i><svg><use href="#q"/></svg><svg><use href="#mic"/></svg><i class="s"></i><svg class="narrow"><use href="#ud"/></svg></div>
<div class="tray"><svg><use href="#sh"/></svg><svg><use href="#dk"/></svg><svg><use href="#or"/></svg><svg><use href="#cat"/></svg><svg><use href="#plus"/></svg><svg><use href="#usb"/></svg><svg><use href="#net"/></svg><svg><use href="#vol"/></svg><svg><use href="#pow"/></svg><svg><use href="#ol"/></svg><time>10:31</time><svg><use href="#mon"/></svg></div>
</footer>

<div class="balloon"><button aria-label="关闭"><svg><use href="#x"/></svg></button><p>方法。</p></div>
<svg class="ears" viewBox="0 0 32 10"><path d="M1 10a7 7 0 0 1 13-2M17 8a7 7 0 0 1 14 2" fill="none" stroke="#dcdfd8" stroke-width="1.500"/></svg>
<div class="brand">
<svg viewBox="0 0 36 38"><path d="M9 4Q9 1 13 2L31 13q5 4 0 9L14 34Q8 37 8 31V10" fill="none" stroke="#c9cee0" stroke-width="3.500" stroke-linecap="round"/><path d="M3 8v20q0 7 6 7" fill="none" stroke="#c9cee0" stroke-width="3" stroke-linecap="round"/><path d="M14 12v13l9-6.500zM25 15h2v8h-2z" fill="#c9cee0"/></svg>
<div><strong>溜溜自学</strong><small>ZiXUE.3D66.COM</small></div>
</div>
</div>
</body>
</html>
```
FILE: styles.css
```css
* { box-sizing: border-box; }
body { margin: 0; background: #d4d0c8; color: #000; font: 10px/12px "Noto Sans Mono CJK SC", "Noto Sans CJK SC", monospace; }
.defs { position: absolute; width: 0; height: 0; }
.app { position: relative; display: flex; flex-direction: column; height: 100vh; overflow: hidden; }
button { padding: 0; border: 0; background: none; color: inherit; font: inherit; display: flex; align-items: center; justify-content: center; flex: none; white-space: nowrap; }
svg { display: block; width: 13px; height: 13px; flex: none; }
p, h1 { margin: 0; font: inherit; }

.title { display: flex; align-items: center; height: 13px; padding: 0 4px 0 2px; gap: 2px; color: #fff; background: linear-gradient(90deg, #0a246a, #a6caf0); }
.title .i { width: 11px; height: 11px; }
.title h1 { font-weight: 700; }
.caps { display: flex; margin-left: auto; color: #000; }
.caps button { width: 11px; height: 10px; background: #d4d0c8; border: 1px solid; border-color: #fff #404040 #404040 #fff; }
.caps svg { width: 8px; height: 8px; }
.caps .cx { margin-left: 2px; }
.menu { display: flex; align-items: center; height: 15px; padding: 0 4px 0 2px; }
.menu > button { width: 40px; }

.bars { display: flex; flex-direction: column; align-items: flex-start; }
.bar { display: flex; align-items: center; height: 21px; padding-right: 3px; border: 1px solid; border-color: #f4f2ee #9a968e #9a968e #f4f2ee; }
.bar > button { width: 17px; height: 17px; }
.bar > .half { width: 9px; }
.first { height: 20px; }
.s { width: 4px; height: 15px; flex: none; background: linear-gradient(90deg, transparent 1px, #9a968e 1px 2px, #fff 2px 3px, transparent 3px); }
.grip { width: 8px; height: 17px; flex: none; background: linear-gradient(90deg, transparent 1px, #fff 1px 2px, #9a968e 2px 3px, transparent 3px 4px, #fff 4px 5px, #9a968e 5px 6px, transparent 6px); }
.grip.wide { width: 13px; background: linear-gradient(90deg, transparent 3px, #9a968e 3px 4px, #fff 4px 5px, transparent 5px 6px, #fff 6px 7px, #9a968e 7px 8px, transparent 8px 9px, #fff 9px 10px, #9a968e 10px 11px, transparent 11px); }
.combo { display: flex; align-items: center; height: 16px; flex: none; padding: 0 1px 0 3px; border: 1px solid; border-color: #6c6a65 #fff #fff #6c6a65; color: #8a8780; }
.combo > svg { width: 12px; height: 12px; }
.combo > .sw { width: 10px; height: 10px; }
.combo::after { content: ""; width: 11px; height: 12px; flex: none; background: linear-gradient(#77746d, #77746d) center/5px 2px no-repeat, #d4d0c8; border: 1px solid; border-color: #fff #6c6a65 #6c6a65 #fff; }
.combo select { flex: 1; min-width: 0; height: 13px; padding: 0 2px; appearance: none; border: 0; background: none; color: #8a8780; opacity: 1; font: inherit; font-size: 9px; line-height: 12px; }
.c126 { width: 127px; }
.c218 { width: 218px; }
.c110 { width: 110px; }
.c116 { width: 117px; }
.c91 { width: 92px; }
.c87 { width: 87px; }
.rule { width: 44px; height: 1px; background: #333; margin-right: 2px; flex: none; }
.rule.short { width: 26px; }

.work { display: flex; flex: 1; min-height: 0; border-top: 1px solid #6c6a65; }
.side { width: 20px; flex: none; border-right: 1px solid #6c6a65; }
.side.right { width: 21px; border: 0; padding-left: 1px; }
.vbar { display: flex; flex-direction: column; align-items: center; width: 18px; padding-bottom: 6px; border: 1px solid; border-color: #fff #9a968e #9a968e #fff; }
.vbar button { width: 16px; height: 16px; }
.vbar .txt { font: 14px/16px "Liberation Sans", sans-serif; }
.hgrip { width: 13px; height: 6px; background: linear-gradient(#fff 1px, #9a968e 1px 2px, transparent 2px 3px, #fff 3px 4px, #9a968e 4px 5px, transparent 5px); }
.canvas { position: relative; flex: 1; min-width: 0; background: #000; }
.canvas svg { width: 100%; height: 100%; }
.ucs { fill: #c0c0c0; font: 10px "Liberation Sans", sans-serif; }
.tip { position: absolute; left: 365px; top: 130px; width: 27px; padding: 0 2px; height: 13px; border: 1px solid #9a9ac0; background: #16165c; color: #d8d8ee; font-size: 9px; line-height: 11px; }

.cmd { display: flex; height: 99px; padding: 7px 15px 4px 4px; border-top: 5px solid #d4d0c8; box-shadow: inset 0 1px #404040; }
.grip.tall { height: auto; }
.term { flex: 1; min-width: 0; display: flex; flex-direction: column; border: 1px solid; border-color: #404040 #fff #fff #404040; background: #fff; font: 11px/12px "Liberation Mono", "Noto Sans CJK SC", monospace; color: #222; }
.log { display: flex; flex: 1; min-height: 0; border-bottom: 1px solid #bbb; }
.lines { flex: 1; }
.lines p { height: 12px; line-height: 12px; }
.scroll { display: flex; flex-direction: column; width: 12px; background: #eceae6; }
.scroll i { flex: 1; }
.scroll button { width: 12px; height: 12px; background: #d4d0c8; border: 1px solid; border-color: #fff #404040 #404040 #fff; }
.scroll svg { width: 8px; height: 8px; }
.term input { width: 70%; height: 14px; padding: 0; border: 0; background: #fff; font: inherit; color: inherit; outline: 0; }

.status { display: flex; align-items: center; height: 18px; gap: 2px; padding: 0 3px; border-top: 1px solid #f4f2ee; font-size: 9px; }
.coord { width: 137px; padding: 0 1px; height: 15px; line-height: 13px; white-space: nowrap; border: 1px solid; border-color: #9a968e #fff #fff #9a968e; }
.status button { height: 15px; padding: 0 1px; border: 1px solid; border-color: #f4f2ee #9a968e #9a968e #f4f2ee; }
.status .on { border-color: #505050 #fff #fff #505050; background: #dedbd5; }
.status .ic { border-width: 0; }
.end { display: flex; align-items: center; margin-left: auto; gap: 2px; }

.task { display: flex; align-items: center; height: 19px; border-top: 1px solid #f4f2ee; font-size: 9px; }
.task button { height: 17px; border: 1px solid; border-color: #fff #505050 #505050 #fff; gap: 3px; }
.task .start { width: 36px; gap: 1px; }
.start svg { width: 12px; height: 13px; }
.ql { margin: 0 7px 0 11px; }
.task .app-b { width: 116px; margin-right: 2px; padding: 0 2px; justify-content: flex-start; }
.task .act { background: #fff; border-color: #505050 #fff #fff #505050; font-weight: 700; font-size: 10px; }
.lang { display: flex; align-items: center; margin-left: auto; gap: 4px; }
.lang a { color: #222; text-decoration: none; margin-right: 20px; }
.lang .s { margin: 0 -3px; }
.lang .narrow { width: 9px; }
.tray { display: flex; align-items: center; gap: 5px; height: 17px; margin: 0 2px; padding: 0 0 0 2px; border: 1px solid; border-color: #9a968e #fff #fff #9a968e; }

.balloon { position: absolute; right: 23px; bottom: 41px; width: 70px; height: 55px; padding: 7px 5px; background: #ffffe1; border: 1px solid #333; border-radius: 10px; display: flex; flex-direction: column; align-items: flex-end; gap: 3px; font-size: 9px; }
.balloon button { width: 12px; height: 12px; background: #d4d0c8; border: 1px solid #555; }
.balloon svg { width: 9px; height: 9px; }
.ears { position: absolute; right: 128px; bottom: 99px; width: 32px; height: 10px; }
.brand { position: absolute; right: 55px; bottom: 15px; width: 180px; height: 85px; padding: 0 0 2px 14px; display: flex; align-items: center; gap: 12px; background: #222f54; color: #c9cee0; }
.brand svg { width: 36px; height: 38px; }
.brand strong { display: block; font: 700 25px/28px "Noto Sans CJK SC", sans-serif; }
.brand small { display: block; font: 12px/12px "DejaVu Sans", sans-serif; }
```
